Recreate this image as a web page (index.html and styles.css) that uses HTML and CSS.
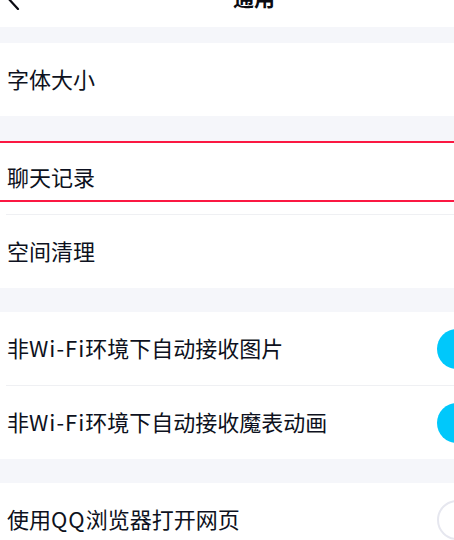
FILE: index.html
```html
<!DOCTYPE html>
<html lang="zh-CN">
<head>
<meta charset="utf-8">
<title>通用</title>
<link rel="stylesheet" href="styles.css">
</head>
<body>
<div class="page">
  <header class="header">
    <svg class="back" width="24" height="26" viewBox="0 0 24 26" aria-hidden="true">
      <path d="M18 1 L7 13 L18 25" fill="none" stroke="#0b0b12" stroke-width="2.2" stroke-linecap="round" stroke-linejoin="round"/>
    </svg>
    <div class="title">通用</div>
  </header>

  <div class="gap gap-top"></div>
  <section class="group">
    <div class="row"><span class="label">字体大小</span></div>
  </section>

  <div class="gap gap-a"></div>
  <section class="group">
    <div class="row row-marked"><span class="label">聊天记录</span></div>
    <div class="sep"></div>
    <div class="row"><span class="label">空间清理</span></div>
  </section>

  <div class="gap"></div>
  <section class="group">
    <div class="row"><span class="label">非<span class="latin">Wi-Fi</span>环境下自动接收图片</span><span class="toggle on"></span></div>
    <div class="sep"></div>
    <div class="row"><span class="label">非<span class="latin">Wi-Fi</span>环境下自动接收魔表动画</span><span class="toggle on"></span></div>
  </section>

  <div class="gap"></div>
  <section class="group">
    <div class="row"><span class="label">使用<span class="latin">QQ</span>浏览器打开网页</span><span class="toggle off"></span></div>
  </section>
</div>
</body>
</html>
```

FILE: styles.css
```css
html, body {
  margin: 0;
  padding: 0;
}
body {
  background: #f5f6fa;
  font-family: "Noto Sans CJK SC", "Noto Sans", sans-serif;
  color: #0d1120;
}
.page {
  width: 454px;
  height: 540px;
  overflow: hidden;
}
.header {
  height: 27px;
  background: #ffffff;
  display: flex;
  align-items: flex-start;
  overflow: hidden;
}
.back {
  display: block;
  flex: none;
  margin-top: -16px;
}
.title {
  margin-top: -14px;
  margin-left: 209px;
  font-size: 21px;
  line-height: 22px;
  font-weight: 700;
  color: #0b0b12;
}
.gap {
  height: 24px;
}
.gap-top {
  height: 16px;
}
.gap-a {
  height: 25px;
}
.group {
  background: #ffffff;
}
.row {
  height: 73px;
  display: flex;
  align-items: center;
  justify-content: space-between;
  padding-left: 7px;
  overflow: hidden;
  position: relative;
}
.label {
  font-size: 22px;
  line-height: 30px;
  margin-bottom: 4px;
  white-space: nowrap;
}
.latin {
  letter-spacing: 1px;
}
.sep {
  height: 1px;
  margin-left: 6px;
  background: #eff0f3;
}
.row-marked::after {
  content: "";
  position: absolute;
  left: 0;
  right: 0;
  top: 0;
  height: 57px;
  border-top: 2px solid #fb1842;
  border-bottom: 2px solid #fb1842;
  pointer-events: none;
}
.toggle {
  flex: none;
  width: 64px;
  height: 40px;
  border-radius: 20px;
  margin-right: -47px;
  box-sizing: border-box;
}
.toggle.on {
  background: #00c8fb;
}
.toggle.off {
  background: #ffffff;
  border: 2px solid #e6e7ef;
}
```
